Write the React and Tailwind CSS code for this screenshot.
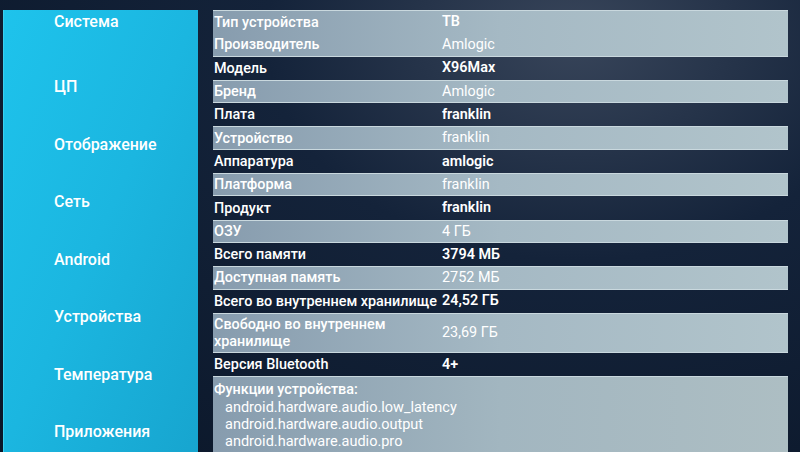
const menu = ['Система', 'ЦП', 'Отображение', 'Сеть', 'Android', 'Устройства', 'Температура', 'Приложения'];

// light: true → светлая полоса, иначе строка на фоне
const rows = [
  { label: 'Тип устройства', value: 'ТВ', light: true, strong: true, noBottom: true },
  { label: 'Производитель', value: 'Amlogic', light: true, noTop: true },
  { label: 'Модель', value: 'X96Max' },
  { label: 'Бренд', value: 'Amlogic', light: true },
  { label: 'Плата', value: 'franklin' },
  { label: 'Устройство', value: 'franklin', light: true },
  { label: 'Аппаратура', value: 'amlogic' },
  { label: 'Платформа', value: 'franklin', light: true },
  { label: 'Продукт', value: 'franklin' },
  { label: 'ОЗУ', value: '4 ГБ', light: true },
  { label: 'Всего памяти', value: '3794 МБ' },
  { label: 'Доступная память', value: '2752 МБ', light: true },
  { label: 'Всего во внутреннем хранилище', value: '24,52 ГБ' },
  { label: 'Свободно во внутреннем хранилище', value: '23,69 ГБ', light: true, tall: true },
  { label: 'Версия Bluetooth', value: '4+' },
];

const features = [
  'android.hardware.audio.low_latency',
  'android.hardware.audio.output',
  'android.hardware.audio.pro',
];

function Row({ row }) {
  const band = row.light
    ? 'bg-gradient-to-r from-[#879cae] via-[#a5b9c4] to-[#b1c4cb] border-[#c9d8de]'
    : 'border-transparent';
  const edges = `${row.noTop ? 'border-t-0' : 'border-t'} ${row.noBottom ? 'border-b-0' : 'border-b'}`;
  return (
    <div className={`flex items-center ${row.tall ? 'h-[40px]' : 'h-[23.3px]'} ${band} ${edges}`}>
      <div className={`w-[229px] pl-[1px] font-medium leading-[17px] ${row.tall ? 'pr-8' : ''}`}>{row.label}</div>
      <div className={row.light && !row.strong ? 'font-normal' : 'font-semibold'}>{row.value}</div>
    </div>
  );
}

export default function App() {
  return (
    <div className="w-[800px] h-[452px] overflow-hidden flex text-white font-['Roboto','Liberation_Sans',sans-serif] bg-[radial-gradient(ellipse_at_72%_8%,#38455a_0%,#14233a_38%,#0a1628_100%)]">
      <div className="ml-[3px] mt-[10px] w-[195px] flex flex-col pl-[50px] bg-gradient-to-br from-[#1ec3ec] via-[#1bb6e0] to-[#17a5cf] border-l border-[#3ad0f0]">
        {menu.map((m, i) => (
          <div
            key={m}
            className={`text-[16px] font-medium leading-[20px] ${i === 0 ? 'mt-[2px]' : i === 1 ? 'mt-[45px]' : 'mt-[37.5px]'}`}
          >
            {m}
          </div>
        ))}
      </div>

      <div className="ml-[15px] mt-[10px] w-[575px] flex flex-col text-[14.4px]">
        {rows.map((r) => (
          <Row key={r.label} row={r} />
        ))}
        <div className="flex-1 flex flex-col pt-[3px] bg-gradient-to-r from-[#879cae] via-[#a2b6c0] to-[#adbec3] border-t border-[#c9d8de]">
          <div className="pl-[1px] font-medium leading-[19px]">Функции устройства:</div>
          <div className="pl-[12px] text-[14.5px] leading-[17px]">
            {features.map((f) => (
              <div key={f}>{f}</div>
            ))}
          </div>
        </div>
      </div>
    </div>
  );
}
